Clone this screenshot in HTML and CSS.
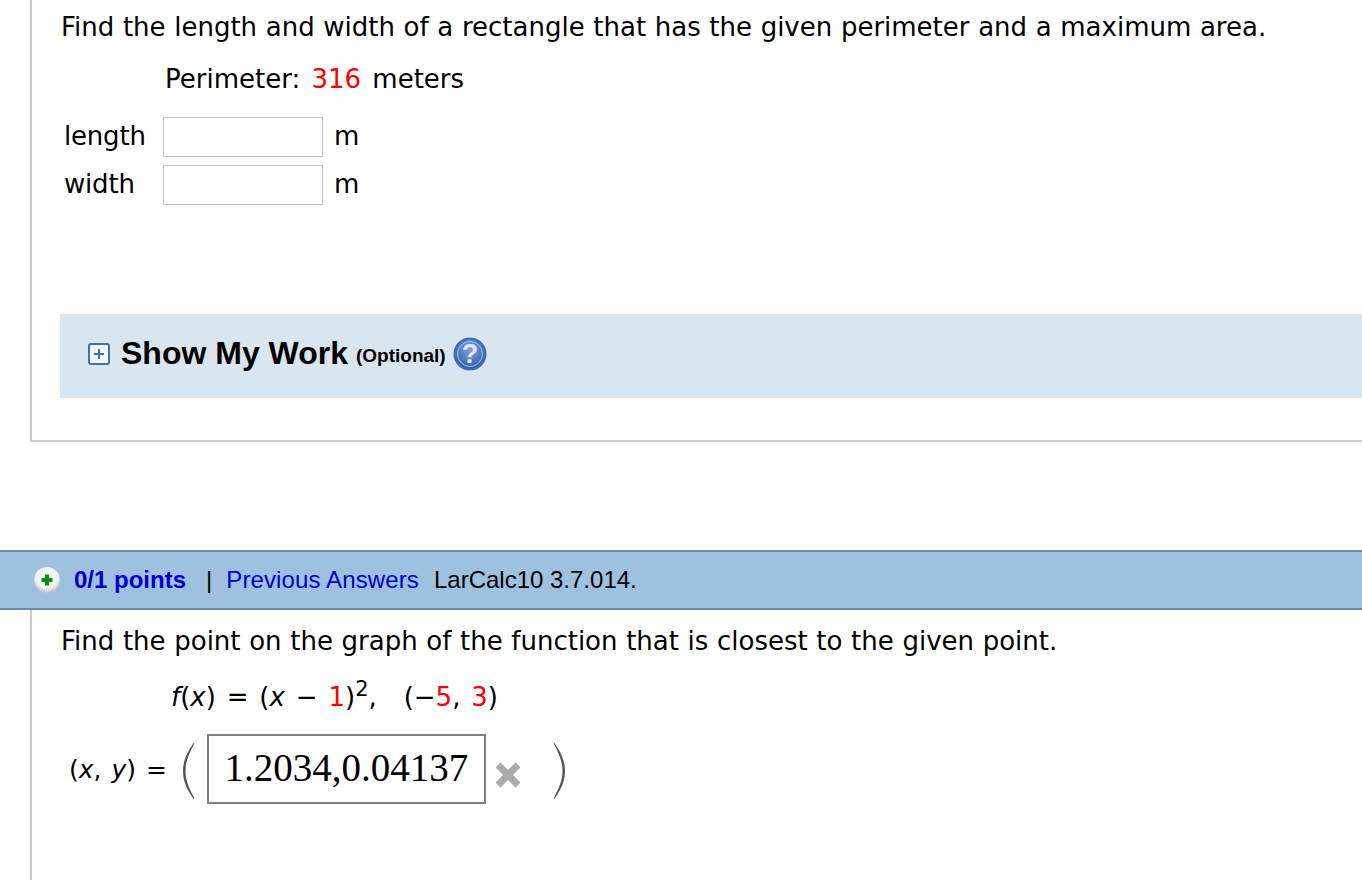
FILE: index.html
```html
<!DOCTYPE html>
<html lang="en">
<head>
<meta charset="utf-8">
<title>Questions</title>
<link rel="stylesheet" href="styles.css">
</head>
<body>
<section class="question first">
  <p class="prompt">Find the length and width of a rectangle that has the given perimeter and a maximum area.</p>
  <p class="given">Perimeter: <span class="red">316</span> meters</p>
  <div class="answers">
    <div class="answer-row"><span class="answer-label">length</span><span class="field"></span><span>m</span></div>
    <div class="answer-row"><span class="answer-label">width</span><span class="field"></span><span>m</span></div>
  </div>
  <div class="work">
    <svg class="expand" width="22" height="22" viewBox="0 0 22 22"><rect x="1" y="1" width="20" height="20" rx="2" fill="#f4f8fb" stroke="#3f72a8" stroke-width="2"/><path d="M6 11h10M11 6v10" stroke="#3f72a8" stroke-width="2"/></svg>
    <span class="work-title">Show My Work</span>
    <span class="work-note">(Optional)</span>
    <svg class="help" width="34" height="34" viewBox="0 0 34 34"><defs><radialGradient id="helpFill" cx="50%" cy="35%" r="65%"><stop offset="0" stop-color="#7fa3dc"/><stop offset="1" stop-color="#2a5ba8"/></radialGradient></defs><circle cx="17" cy="17" r="15.500" fill="url(#helpFill)" stroke="#3c6fb5" stroke-width="2"/><circle cx="17" cy="17" r="12.500" fill="none" stroke="#a9c3e6" stroke-width="1"/><text class="help-mark" x="17" y="26" text-anchor="middle">?</text></svg>
  </div>
</section>
<header class="question-bar">
  <svg class="status" width="28" height="28" viewBox="0 0 28 28"><defs><radialGradient id="statusFill" cx="50%" cy="40%" r="60%"><stop offset="0" stop-color="#ffffff"/><stop offset="0.7" stop-color="#f2f2ee"/><stop offset="1" stop-color="#bdbdb8"/></radialGradient></defs><circle cx="14" cy="14" r="13" fill="url(#statusFill)"/><path d="M8.500 14h11M14 8.500v11" stroke="#0b8a1e" stroke-width="4"/></svg>
  <strong class="points">0/1 points</strong>
  <span class="pipe">|</span>
  <span class="previous">Previous Answers</span>
  <span class="source">LarCalc10 3.7.014.</span>
</header>
<section class="question second">
  <p class="prompt">Find the point on the graph of the function that is closest to the given point.</p>
  <p class="formula"><i>f</i>(<i>x</i>) = (<i>x</i> − <span class="red">1</span>)<sup>2</sup>, <span class="formula-point">(−<span class="red">5</span>, <span class="red">3</span>)</span></p>
  <div class="result">
    <span class="result-label">(<i>x</i>, <i>y</i>) =</span>
    <svg class="paren" width="14" height="56" viewBox="0 0 14 56"><path d="M11.500 0C4 11 1 19 1 28s3 17 10.500 28l.8-.6C6.500 44 3.500 37 3.500 28S6.500 12 12.300.6z" fill="#555"/></svg>
    <span class="math-box">1.2034,0.04137</span>
    <svg class="wrong" width="28" height="28" viewBox="0 0 28 28"><path d="M4 4l20 20M24 4L4 24" stroke="#aaa" stroke-width="7"/></svg>
    <svg class="paren close" width="14" height="56" viewBox="0 0 14 56"><path d="M2.500 0C10 11 13 19 13 28s-3 17-10.500 28l-.8-.6C7.500 44 10.500 37 10.500 28S7.500 12 1.700.600z" fill="#555"/></svg>
  </div>
</section>
</body>
</html>
```

FILE: styles.css
```css
* { box-sizing: border-box; }
html, body { margin: 0; height: 880px; overflow: hidden; background: #fff; }
body { font-family: "DejaVu Sans", Verdana, sans-serif; font-size: 26px; color: #000; }
p { margin: 0; }
.red { color: #f00; }
.question { margin-left: 30px; border-left: 2px solid #ccc; padding-left: 28px; }
.first { height: 442px; border-bottom: 2px solid #ccc; padding-top: 10px; }
.prompt { line-height: 34px; margin-left: 1px; word-spacing: .38px; }
.given { margin: 18px 0 0 105px; line-height: 34px; word-spacing: 3px; }
.answers { margin: 21px 0 0 5px; display: flex; flex-direction: column; gap: 8px; }
.answer-row { display: flex; align-items: flex-start; height: 40px; line-height: 38px; }
.answer-label { width: 98px; margin-left: -1px; margin-right: 1px; letter-spacing: -.2px; }
.field { width: 160px; height: 40px; border: 1px solid #c4c4c4; background: #fff; margin-right: 11px; }
.work { margin-top: 109px; height: 84px; padding-bottom: 5px; background: #d9e5ef; display: flex; align-items: center; padding-left: 28px; font-family: "Liberation Sans", Arial, sans-serif; }
.expand { margin-right: 11px; }
.work-title { font-size: 32px; font-weight: 700; }
.work-note { font-size: 19px; font-weight: 700; margin: 4px 7px 0 8px; }
.help-mark { font: 700 27px "Liberation Sans", Arial, sans-serif; fill: #dfe9f6; }
.question-bar { margin-top: 108px; height: 60px; background: #9dc1df; border-top: 2px solid #6f8ca5; border-bottom: 2px solid #6f8ca5; display: flex; align-items: center; padding-left: 33px; font-family: "Liberation Sans", Arial, sans-serif; font-size: 24px; }
.status { margin-right: 13px; }
.points { color: #0000c8; }
.pipe { margin: 0 14px 0 20px; }
.previous { color: #0000c8; margin-right: 15px; letter-spacing: .12px; }
.second { height: 270px; padding-top: 14px; }
.formula { margin: 19px 0 0 111px; line-height: 40px; word-spacing: 2.6px; }
.formula sup { font-size: 21px; line-height: 0; }
.formula-point { margin-left: 16px; }
.result { margin: 17px 0 0 9px; display: flex; align-items: center; }
.result-label { margin-right: 15px; font-size: 25px; word-spacing: 2px; }
.math-box { margin-left: 11px; width: 279px; height: 70px; border: 2px solid #808080; font: 39px/63px "Liberation Serif", serif; text-align: center; }
.paren { margin-top: 4px; }
.wrong { margin: 11px 0 0 8px; }
.close { margin-left: 30px; }
```
